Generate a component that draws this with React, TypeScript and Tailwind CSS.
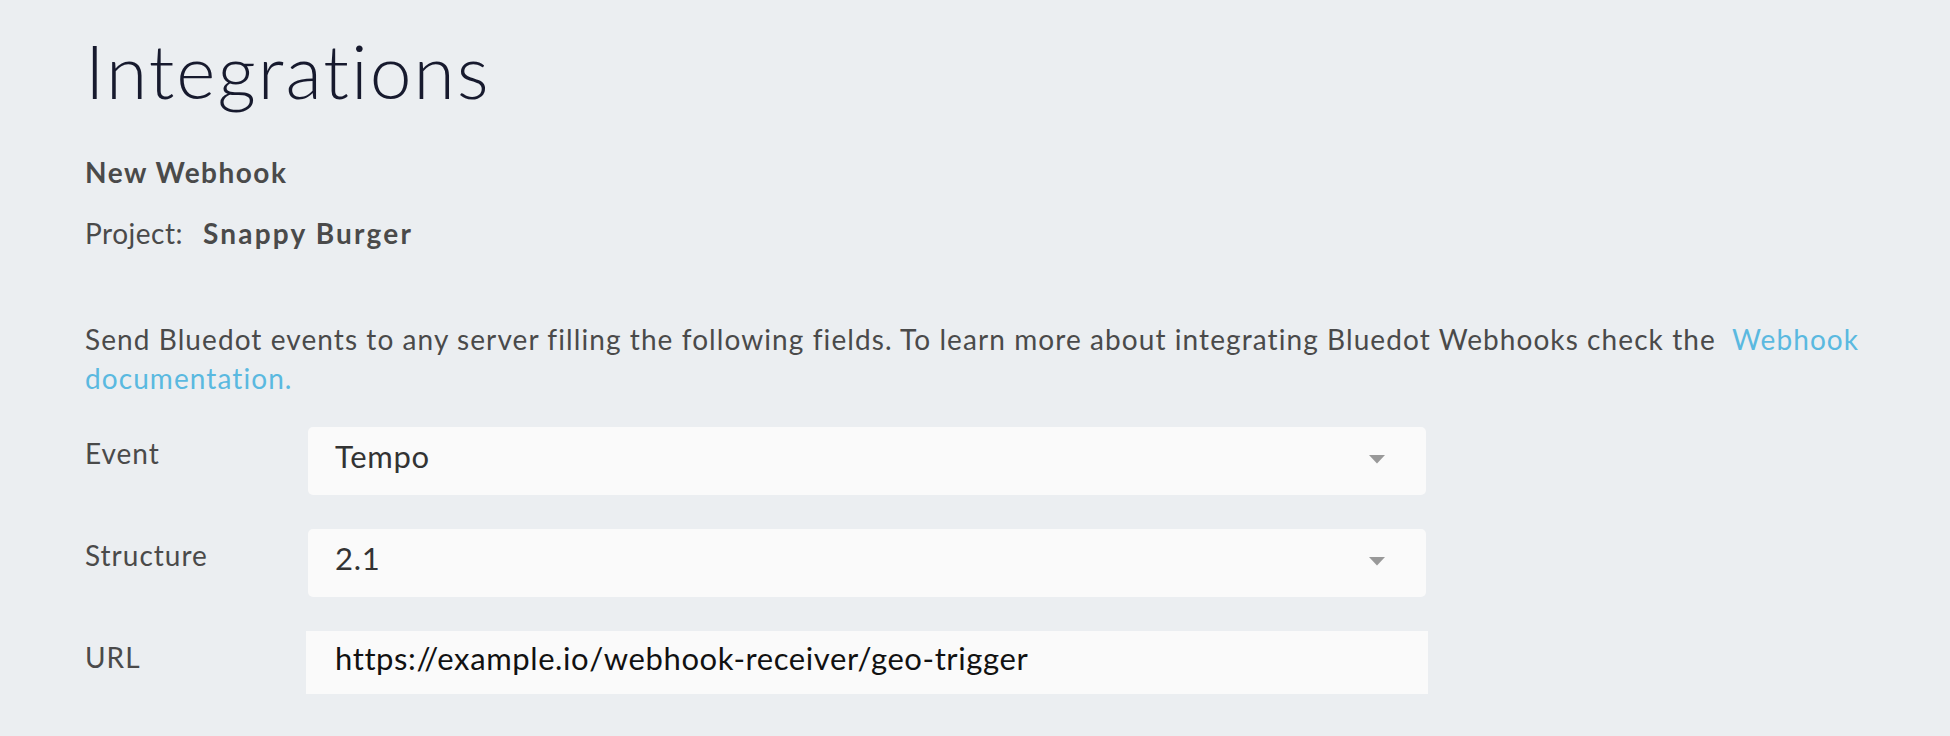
import { ReactNode } from 'react';

const font = { fontFamily: 'Lato, "Open Sans", sans-serif' };

function Row({ label, children }: { label: string; children: ReactNode }) {
  return (
    <div className="flex items-start">
      <div className="w-[223px] shrink-0 pt-[12px] text-[28px] leading-[28px] tracking-[1px] text-[#4a4a4a]">
        {label}
      </div>
      {children}
    </div>
  );
}

function Select({ value }: { value: string }) {
  return (
    <div className="flex h-[68px] w-[1118px] items-start justify-between rounded-[5px] bg-[#fafafa] pl-[27px] pr-[41px] pt-[14px]">
      <span className="text-[31px] leading-[31px] tracking-[0.7px] text-[#333333]">{value}</span>
      <svg width="16" height="9" viewBox="0 0 16 9" className="mt-[14px]">
        <path d="M0 0 H16 L8 8.5 Z" fill="#999999" />
      </svg>
    </div>
  );
}

export default function App() {
  return (
    <div style={font} className="min-h-screen bg-[#ebeef1] pl-[85px] pt-[33px] pb-10 [font-variant-ligatures:none]">
      <h1 className="text-[75px] font-light leading-[75px] tracking-[2px] text-[#171a2e]">Integrations</h1>

      <div className="mt-[50px] text-[28px] font-bold leading-[28px] tracking-[1.5px] text-[#4a4a4a]">
        New Webhook
      </div>

      <div className="mt-[33px] flex text-[28px] leading-[28px] text-[#4a4a4a]">
        <span className="tracking-[0.5px]">Project:</span>
        <span className="ml-[20px] font-bold tracking-[2.2px]">Snappy Burger</span>
      </div>

      {/* wraps after "Webhook" like the original */}
      <p className="mt-[73px] w-[1810px] text-[28px] leading-[39px] tracking-[1.08px] text-[#4a4a4a]">
        Send Bluedot events to any server filling the following fields. To learn more about integrating Bluedot
        Webhooks check the{' '}
        <a href="#" className="ml-[8px] text-[#5ab9e0]">
          Webhook documentation.
        </a>
      </p>

      <div className="mt-[29px] flex flex-col gap-[34px]">
        <Row label="Event">
          <Select value="Tempo" />
        </Row>
        <Row label="Structure">
          <Select value="2.1" />
        </Row>
        <Row label="URL">
          <div className="-ml-[2px] h-[63px] w-[1122px] bg-[#fafafa] pl-[29px] pt-[12px]">
            <span className="text-[31px] leading-[31px] tracking-[0.6px] text-[#111111]">
              https://example.io/webhook-receiver/geo-trigger
            </span>
          </div>
        </Row>
      </div>
    </div>
  );
}
